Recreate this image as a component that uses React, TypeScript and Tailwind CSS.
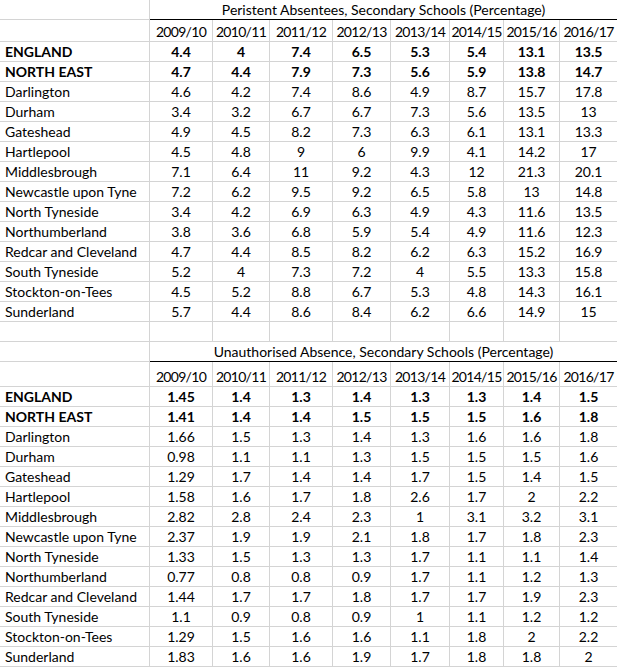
import clsx from "clsx";

const years = ["2009/10", "2010/11", "2011/12", "2012/13", "2013/14", "2014/15", "2015/16", "2016/17"];

type Row = { name: string; values: string[]; bold?: boolean };

const persistent: Row[] = [
  { name: "ENGLAND", values: ["4.4", "4", "7.4", "6.5", "5.3", "5.4", "13.1", "13.5"], bold: true },
  { name: "NORTH EAST", values: ["4.7", "4.4", "7.9", "7.3", "5.6", "5.9", "13.8", "14.7"], bold: true },
  { name: "Darlington", values: ["4.6", "4.2", "7.4", "8.6", "4.9", "8.7", "15.7", "17.8"] },
  { name: "Durham", values: ["3.4", "3.2", "6.7", "6.7", "7.3", "5.6", "13.5", "13"] },
  { name: "Gateshead", values: ["4.9", "4.5", "8.2", "7.3", "6.3", "6.1", "13.1", "13.3"] },
  { name: "Hartlepool", values: ["4.5", "4.8", "9", "6", "9.9", "4.1", "14.2", "17"] },
  { name: "Middlesbrough", values: ["7.1", "6.4", "11", "9.2", "4.3", "12", "21.3", "20.1"] },
  { name: "Newcastle upon Tyne", values: ["7.2", "6.2", "9.5", "9.2", "6.5", "5.8", "13", "14.8"] },
  { name: "North Tyneside", values: ["3.4", "4.2", "6.9", "6.3", "4.9", "4.3", "11.6", "13.5"] },
  { name: "Northumberland", values: ["3.8", "3.6", "6.8", "5.9", "5.4", "4.9", "11.6", "12.3"] },
  { name: "Redcar and Cleveland", values: ["4.7", "4.4", "8.5", "8.2", "6.2", "6.3", "15.2", "16.9"] },
  { name: "South Tyneside", values: ["5.2", "4", "7.3", "7.2", "4", "5.5", "13.3", "15.8"] },
  { name: "Stockton-on-Tees", values: ["4.5", "5.2", "8.8", "6.7", "5.3", "4.8", "14.3", "16.1"] },
  { name: "Sunderland", values: ["5.7", "4.4", "8.6", "8.4", "6.2", "6.6", "14.9", "15"] },
];

const unauthorised: Row[] = [
  { name: "ENGLAND", values: ["1.45", "1.4", "1.3", "1.4", "1.3", "1.3", "1.4", "1.5"], bold: true },
  { name: "NORTH EAST", values: ["1.41", "1.4", "1.4", "1.5", "1.5", "1.5", "1.6", "1.8"], bold: true },
  { name: "Darlington", values: ["1.66", "1.5", "1.3", "1.4", "1.3", "1.6", "1.6", "1.8"] },
  { name: "Durham", values: ["0.98", "1.1", "1.1", "1.3", "1.5", "1.5", "1.5", "1.6"] },
  { name: "Gateshead", values: ["1.29", "1.7", "1.4", "1.4", "1.7", "1.5", "1.4", "1.5"] },
  { name: "Hartlepool", values: ["1.58", "1.6", "1.7", "1.8", "2.6", "1.7", "2", "2.2"] },
  { name: "Middlesbrough", values: ["2.82", "2.8", "2.4", "2.3", "1", "3.1", "3.2", "3.1"] },
  { name: "Newcastle upon Tyne", values: ["2.37", "1.9", "1.9", "2.1", "1.8", "1.7", "1.8", "2.3"] },
  { name: "North Tyneside", values: ["1.33", "1.5", "1.3", "1.3", "1.7", "1.1", "1.1", "1.4"] },
  { name: "Northumberland", values: ["0.77", "0.8", "0.8", "0.9", "1.7", "1.1", "1.2", "1.3"] },
  { name: "Redcar and Cleveland", values: ["1.44", "1.7", "1.7", "1.8", "1.7", "1.7", "1.9", "2.3"] },
  { name: "South Tyneside", values: ["1.1", "0.9", "0.8", "0.9", "1", "1.1", "1.2", "1.2"] },
  { name: "Stockton-on-Tees", values: ["1.29", "1.5", "1.6", "1.6", "1.1", "1.8", "2", "2.2"] },
  { name: "Sunderland", values: ["1.83", "1.6", "1.6", "1.9", "1.7", "1.8", "1.8", "2"] },
];

// column widths match the sheet: label + 8 years
const cols = "grid grid-cols-[150px_63px_57px_63px_58px_59px_54px_56px_1fr]";
const cell = "border-r border-b border-[#d4d4d4] overflow-hidden whitespace-nowrap";

function TitleRow({ title, height }: { title: string; height: string }) {
  return (
    <div className={clsx(cols, height)}>
      <div className={cell} />
      <div className="col-span-8 flex items-end justify-center border-b border-black pb-px">{title}</div>
    </div>
  );
}

function YearRow({ height }: { height: string }) {
  return (
    <div className={clsx(cols, height)}>
      <div className={cell} />
      {years.map((y, i) => (
        <div
          key={y}
          className={clsx(cell, "flex items-end justify-center pb-px tracking-[-0.7px]", i === 7 && "border-r-0")}
        >
          {y}
        </div>
      ))}
    </div>
  );
}

function DataRow({ row }: { row: Row }) {
  return (
    <div className={clsx(cols, "h-5", row.bold && "font-bold")}>
      <div className={clsx(cell, "flex items-end pb-px pl-[5px]")}>{row.name}</div>
      {row.values.map((v, i) => (
        <div key={i} className={clsx(cell, "flex items-end justify-center pb-px", i === 7 && "border-r-0")}>
          {v}
        </div>
      ))}
    </div>
  );
}

function Section({ title, rows, titleH, headH }: { title: string; rows: Row[]; titleH: string; headH: string }) {
  return (
    <>
      <TitleRow title={title} height={titleH} />
      <YearRow height={headH} />
      {rows.map((r) => (
        <DataRow key={r.name} row={r} />
      ))}
    </>
  );
}

export default function App() {
  return (
    <div className="w-[617px] h-[668px] overflow-hidden bg-white text-black font-['Lato',sans-serif] text-[14px] leading-[16px]">
      <Section title="Peristent Absentees, Secondary Schools (Percentage)" rows={persistent} titleH="h-5" headH="h-[22px]" />
      <div className={clsx(cols, "h-5")}>
        {Array.from({ length: 9 }).map((_, i) => (
          <div key={i} className={clsx(cell, i === 8 && "border-r-0")} />
        ))}
      </div>
      <Section title="Unauthorised Absence, Secondary Schools (Percentage)" rows={unauthorised} titleH="h-5" headH="h-[25px]" />
    </div>
  );
}
